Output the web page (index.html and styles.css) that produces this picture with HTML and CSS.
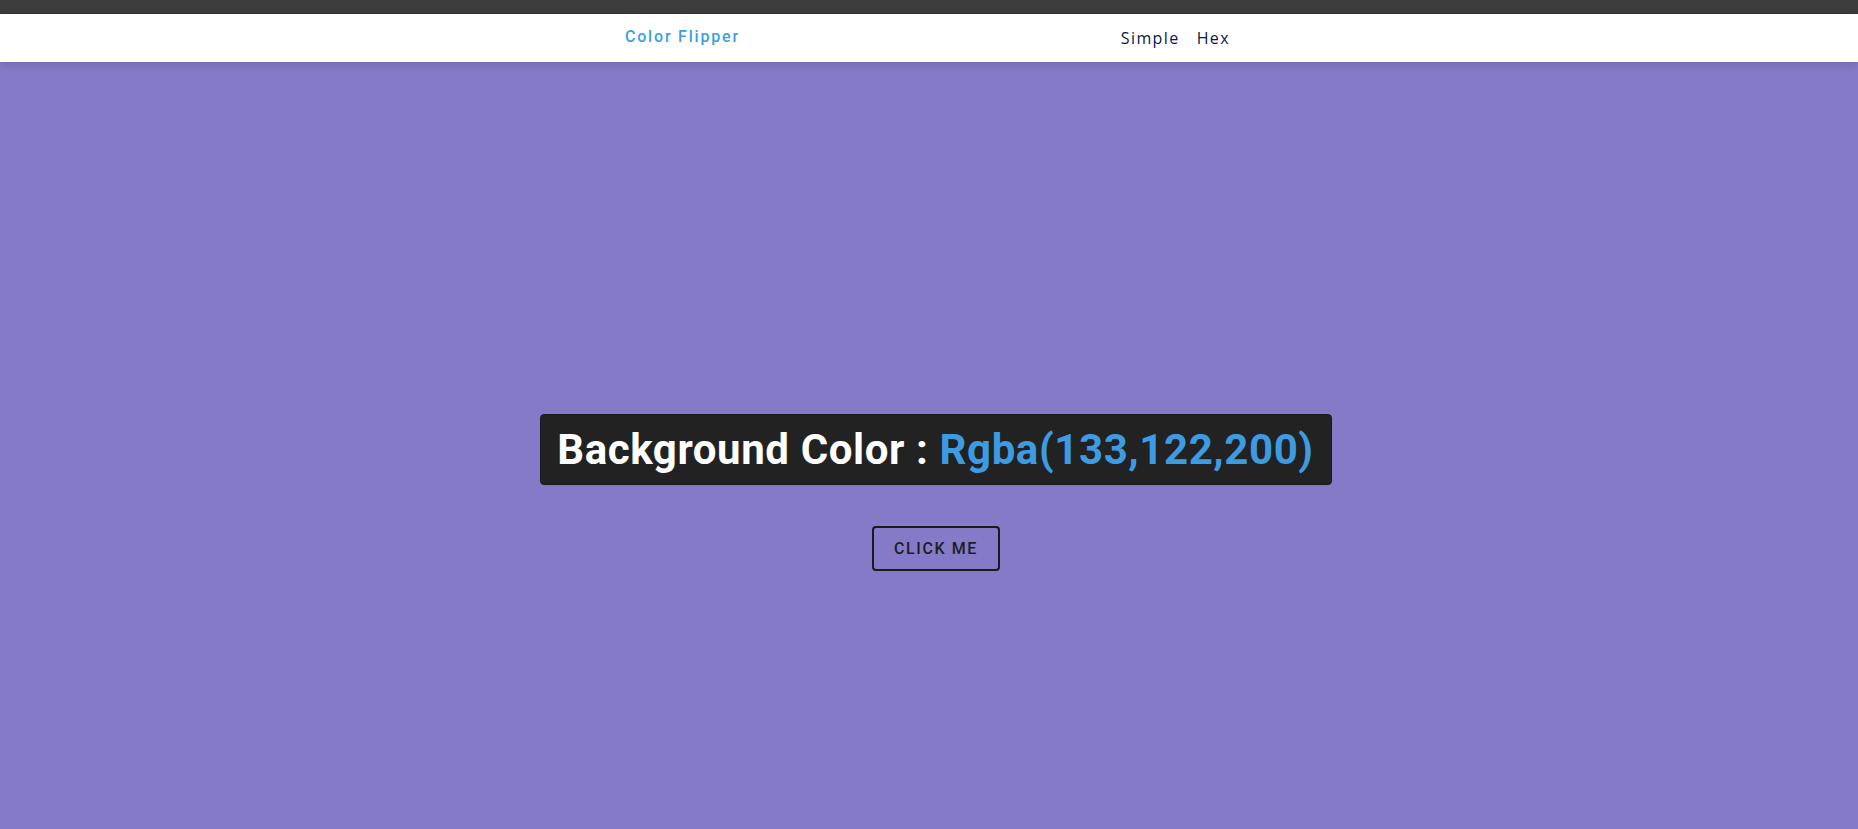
FILE: index.html
```html
<!DOCTYPE html>
<html lang="en">
<head>
<meta charset="UTF-8">
<title>Color Flipper</title>
<link rel="stylesheet" href="styles.css">
</head>
<body>
<div class="topbar"></div>
<nav class="nav">
  <div class="nav-center">
    <h4 class="brand">Color Flipper</h4>
    <ul class="nav-links">
      <li><a href="#">Simple</a></li>
      <li><a href="#">Hex</a></li>
    </ul>
  </div>
</nav>
<main class="main">
  <div class="container">
    <h2 class="title">Background Color : <span class="color">Rgba(133,122,200)</span></h2>
    <button class="btn-hero" type="button">Click me</button>
  </div>
</main>
</body>
</html>
```

FILE: styles.css
```css
* {
  margin: 0;
  padding: 0;
  box-sizing: border-box;
}

html, body {
  height: 100%;
}

body {
  font-family: Roboto, "Open Sans", sans-serif;
  background: rgb(133, 122, 200);
  overflow: hidden;
}

.topbar {
  height: 14px;
  background: #3c3c3c;
  border-bottom: 1px solid #333;
}

.nav {
  height: 48px;
  background: #ffffff;
  box-shadow: 0 4px 8px rgba(0, 0, 0, 0.12);
  display: flex;
  align-items: center;
  position: relative;
  z-index: 1;
}

.nav-center {
  width: 608px;
  padding-right: 3px;
  margin: 0 auto;
  display: flex;
  justify-content: space-between;
  align-items: center;
}

.brand {
  font-family: Roboto, sans-serif;
  font-size: 16px;
  font-weight: 500;
  color: #3a9fe6;
  letter-spacing: 1.8px;
  margin-top: -4px;
}

.nav-links {
  list-style: none;
  display: flex;
  gap: 17px;
}

.nav-links a {
  font-family: "Open Sans", sans-serif;
  font-size: 16px;
  text-decoration: none;
  color: #0b1745;
  letter-spacing: 1.4px;
}

.main {
  display: flex;
  justify-content: center;
  padding-left: 14px;
}

.container {
  padding-top: 352px;
  display: flex;
  flex-direction: column;
  align-items: center;
}

.title {
  background: #222222;
  color: #ffffff;
  font-size: 42px;
  font-weight: 700;
  line-height: 37px;
  padding: 16px 17px 16px 16px;
  border-radius: 4px;
  border: 1px solid #1a1a1a;
  margin-bottom: 41px;
  letter-spacing: 0.6px;
}

.color {
  color: #3d9be2;
}

.btn-hero {
  font-family: Roboto, sans-serif;
  text-transform: uppercase;
  background: transparent;
  color: #1e1e1e;
  letter-spacing: 1.6px;
  font-weight: 500;
  font-size: 16px;
  line-height: 17px;
  border: 2px solid #1a1a1a;
  border-radius: 4px;
  padding: 12px 20px;
  cursor: pointer;
}
```
